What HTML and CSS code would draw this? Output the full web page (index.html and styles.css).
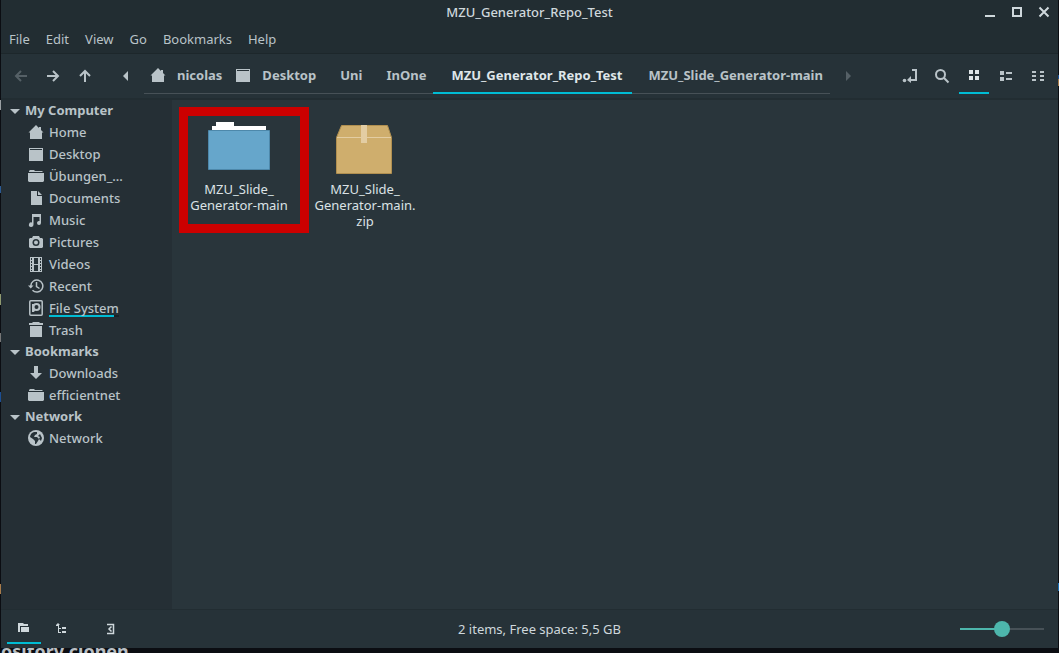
FILE: index.html
```html
<!DOCTYPE html>
<html lang="en">
<head>
<meta charset="utf-8">
<title>MZU_Generator_Repo_Test</title>
<link rel="stylesheet" href="styles.css">
</head>
<body>
<svg class="defs" aria-hidden="true">
  <symbol id="home" viewBox="0 0 16 16"><path d="M8 1 0.5 8.5H2V15h12V8.500h1.500L13 6V3h-2v1z"/></symbol>
  <symbol id="desktop" viewBox="0 0 16 16"><path d="M1 2h14v13H1z"/><path class="cut" d="M2 3h12v1H2z"/></symbol>
  <symbol id="folder" viewBox="0 0 16 16"><path d="M2 2h4l1 1h7l1 1H1V3z"/><path d="M0 5h16v8l-1 1H1l-1-1z"/></symbol>
  <symbol id="doc" viewBox="0 0 16 16"><path d="M3 1h6v5h5v9H3z"/><path d="M10 1l4 4h-4z"/></symbol>
  <symbol id="music" viewBox="0 0 16 16"><path d="M4 2h9v9a2 2 0 1 1-1.500-2V5H5.500v7.500A2.300 2.300 0 1 1 4 10.500z"/></symbol>
  <symbol id="camera" viewBox="0 0 16 16"><path d="M5 2h6l1 2h2l1 1v8l-1 1H2l-1-1V5l1-1h2z"/><circle class="cut" cx="8" cy="8.500" r="3.500"/><circle cx="8" cy="8.500" r="2"/></symbol>
  <symbol id="film" viewBox="0 0 16 16"><path d="M2 1h12v15H2z"/><path class="cut" d="M6 2h4v6H6zM6 9h4v6H6zM3 2h1v2H3zM3 5h1v2H3zM3 8h1v2H3zM3 11h1v2H3zM3 14h1v1H3zM12 2h1v2h-1zM12 5h1v2h-1zM12 8h1v2h-1zM12 11h1v2h-1zM12 14h1v1h-1z"/></symbol>
  <symbol id="recent" viewBox="0 0 16 16"><path class="line" d="M2.800 8A6 6 0 1 1 4.500 12.200M8.500 4v4.500l3 2"/><path d="M0 7.500h5.500L2.800 10.500z"/></symbol>
  <symbol id="disk" viewBox="0 0 16 16"><rect class="line" x="1.800" y="0.800" width="12.400" height="14.400" rx="1"/><circle class="line thick" cx="8.500" cy="7" r="3"/><path d="M4 4h2v8H4zM6 9l2 0-2 3z"/></symbol>
  <symbol id="trash" viewBox="0 0 16 16"><path d="M5 0h6l1 1h3v2H1V1h3zM2 4h12v11H2z"/></symbol>
  <symbol id="down" viewBox="0 0 16 16"><path d="M6 1h4v7h4l-6 6-6-6h4z"/></symbol>
  <symbol id="globe" viewBox="0 0 16 16"><circle cx="8" cy="8" r="8"/><path class="cut" d="M6 2l3 0 0 2-2 1-1 2h3l2 2-1 2-2 3-1 0V11L5 9 2 7a6 6 0 0 1 4-5zM12 4l2 4-1 3-2-2 1-2-2-1z"/></symbol>
</svg>

<div class="window">
  <header class="titlebar">
    <h1>MZU_Generator_Repo_Test</h1>
    <div class="controls">
      <button aria-label="Minimize"><svg viewBox="0 0 16 16"><path d="M3 11h10v2H3z"/></svg></button>
      <button aria-label="Maximize"><svg viewBox="0 0 16 16"><path class="line thick" d="M4 4h8v8H4z"/></svg></button>
      <button aria-label="Close"><svg viewBox="0 0 16 16"><path class="line thick" d="M3.500 3.500l9 9M12.500 3.500l-9 9"/></svg></button>
    </div>
  </header>
  <nav class="menubar">
    <button>File</button><button>Edit</button><button>View</button><button>Go</button><button>Bookmarks</button><button>Help</button>
  </nav>
  <div class="toolbar">
    <div class="history">
      <button aria-label="Back" disabled><svg viewBox="0 0 16 16"><path class="line thick" d="M14 8H3M8 3L3 8l5 5"/></svg></button>
      <button aria-label="Forward"><svg viewBox="0 0 16 16"><path class="line thick" d="M2 8h11M8 3l5 5-5 5"/></svg></button>
      <button aria-label="Up"><svg viewBox="0 0 16 16"><path class="line thick" d="M8 14V3M3 8l5-5 5 5"/></svg></button>
    </div>
    <button class="scroll" aria-label="Earlier folders"><svg viewBox="0 0 16 16"><path d="M10 3v10L5 8z"/></svg></button>
    <nav class="path">
      <button class="first"><svg><use href="#home"/></svg>nicolas</button>
      <button class="second"><svg><use href="#desktop"/></svg>Desktop</button>
      <button>Uni</button>
      <button>InOne</button>
      <button class="active">MZU_Generator_Repo_Test</button>
      <button>MZU_Slide_Generator-main</button>
    </nav>
    <button class="scroll dim" aria-label="Later folders"><svg viewBox="0 0 16 16"><path d="M6 3v10l5-5z"/></svg></button>
    <div class="views">
      <button aria-label="Edit location"><svg viewBox="0 0 16 16"><path class="line thick" d="M10 2h4v10H8"/><path d="M9 8v7l-4-3z"/><circle cx="2.500" cy="12.500" r="1.800"/></svg></button>
      <button aria-label="Search"><svg viewBox="0 0 16 16"><circle class="line thick" cx="6.500" cy="6.500" r="4.500"/><path class="line thick" d="M9.800 9.800L14.500 14.500"/></svg></button>
      <button class="active" aria-label="Icon view"><svg viewBox="0 0 16 16"><path d="M3 3h4v4H3zM9 3h4v4H9zM3 9h4v4H3zM9 9h4v4H9z"/></svg></button>
      <button aria-label="List view"><svg viewBox="0 0 16 16"><path d="M2 3h4v4H2zM2 9h4v4H2zM8 4h6v2H8zM8 10h6v2H8z"/></svg></button>
      <button aria-label="Compact view"><svg viewBox="0 0 16 16"><path d="M2 3h4v2H2zM2 7h4v2H2zM2 11h4v2H2zM10 3h4v2h-4zM10 7h4v2h-4zM10 11h4v2h-4z"/></svg></button>
    </div>
  </div>
  <div class="body">
    <aside class="sidebar">
      <h2>My Computer</h2>
      <ul>
        <li><a href="#"><svg><use href="#home"/></svg>Home</a></li>
        <li><a href="#"><svg><use href="#desktop"/></svg>Desktop</a></li>
        <li><a href="#"><svg><use href="#folder"/></svg>Übungen_...</a></li>
        <li><a href="#"><svg><use href="#doc"/></svg>Documents</a></li>
        <li><a href="#"><svg><use href="#music"/></svg>Music</a></li>
        <li><a href="#"><svg><use href="#camera"/></svg>Pictures</a></li>
        <li><a href="#"><svg><use href="#film"/></svg>Videos</a></li>
        <li><a href="#"><svg><use href="#recent"/></svg>Recent</a></li>
        <li><a href="#"><svg><use href="#disk"/></svg><span class="usage">File System</span></a></li>
        <li><a href="#"><svg><use href="#trash"/></svg>Trash</a></li>
      </ul>
      <h2>Bookmarks</h2>
      <ul>
        <li><a href="#"><svg><use href="#down"/></svg>Downloads</a></li>
        <li><a href="#"><svg><use href="#folder"/></svg>efficientnet</a></li>
      </ul>
      <h2>Network</h2>
      <ul>
        <li><a href="#"><svg><use href="#globe"/></svg>Network</a></li>
      </ul>
    </aside>
    <main class="files">
      <a class="file" href="#">
        <svg viewBox="0 0 64 64"><path fill="#fff" d="M9 8h18v4h32v6H5v-6h4z"/><path fill="#66a6cb" stroke="#4d88ab" d="M1.500 16.500h61v39h-61z"/></svg>
        <span>MZU_Slide_<br>Generator-main</span>
        <i class="highlight"></i>
      </a>
      <a class="file" href="#">
        <svg viewBox="0 0 64 64"><path fill="#cfae6d" stroke="#b08f50" d="M8.500 11.500h46l4 12v36h-55v-36z"/><path fill="#e3cda3" d="M4 23h54v1H4zM28 11h6v18h-6z"/></svg>
        <span>MZU_Slide_<br>Generator-main.<br>zip</span>
      </a>
    </main>
  </div>
  <footer class="status">
    <div class="toggles">
      <button class="active" aria-label="Places"><svg viewBox="0 0 16 16"><path d="M2 3h5l1 1h4v2H4v6H2z"/><path d="M5 7h8v5H5z"/></svg></button>
      <button aria-label="Tree"><svg viewBox="0 0 16 16"><path d="M4 2l2 2H5v3h2v1H5v3h2v1H4V5H2V4zM8 6h4v2H8zM8 10h4v2H8z"/></svg></button>
      <button class="hide" aria-label="Hide sidebar"><svg viewBox="0 0 16 16"><path class="line" d="M5 3.500h6.500v9H5M9.500 5.500L7 8l2.500 2.500"/></svg></button>
    </div>
    <p>2 items, Free space: 5,5 GB</p>
    <input class="zoom" type="range" min="0" max="100" value="50" aria-label="Zoom">
  </footer>
</div>
<div class="behind"><span>ository clonen</span></div>
</body>
</html>
```
FILE: styles.css
```css
* { box-sizing: border-box; }
body {
  margin: 0;
  height: 100vh;
  display: flex;
  flex-direction: column;
  overflow: hidden;
  padding: 0 1px;
  background:
    linear-gradient(#0b0d12 100px, #9aa0a3 100px 110px, #0b0d12 110px 186px, #2a5a94 186px 193px, #0b0d12 193px 294px, #8f9a70 294px 305px, #0b0d12 305px 333px, #777 333px 342px, #0b0d12 342px 392px, #1c4f94 392px 402px, #0b0d12 402px 584px, #a87b4a 584px 594px, #0b0d12 594px) left / 1px 100% no-repeat,
    linear-gradient(#0b0d12 75px, #1c4f94 75px 79px, #a87b4a 79px 86px, #0b0d12 86px 583px, #1c6fb4 583px 591px, #0b0d12 591px) right / 1px 100% no-repeat,
    #0b0d12;
  font: 13px/16px "Noto Sans", sans-serif;
  color: #b9c3c8;
}
.defs { position: absolute; width: 0; height: 0; }
button { border: 0; padding: 0; background: none; font: inherit; color: inherit; }
a { color: inherit; text-decoration: none; }
h1, h2, p, ul { margin: 0; padding: 0; font-size: 13px; }
ul { list-style: none; }
svg { width: 16px; height: 16px; fill: currentColor; display: block; flex: none; }
.line { fill: none; stroke: currentColor; stroke-width: 1.5; }
.thick { stroke-width: 2; }
.cut { fill: #263238; }
.window { flex: 1; min-height: 0; display: flex; flex-direction: column; background: #263238; }
.titlebar {
  display: grid;
  grid-template-columns: 1fr auto 1fr;
  align-items: center;
  height: 25px;
  padding-bottom: 1px;
  background: #222d32;
}
.titlebar h1 { grid-column: 2; font-weight: 500; color: #cfd8dc; }
.controls { display: flex; justify-content: flex-end; gap: 11px; padding-right: 6px; color: #cfd8dc; }
.menubar {
  display: flex;
  align-items: center;
  gap: 16px;
  height: 29px;
  padding-left: 8px;
  background: #222d32;
  border-bottom: 1px solid #1d272b;
}
.toolbar { display: flex; height: 46px; border-bottom: 2px solid #222d32; padding: 0 5px 0 12px; }
.history { display: flex; gap: 16px; }
.history button:disabled { color: #556066; }
.scroll { width: 36px; display: grid; place-items: center; }
.history + .scroll { width: 44px; padding-left: 21px; margin-right: 7px; }
.dim { color: #556066; }
.path { display: flex; height: 40px; border-bottom: 1px solid #475157; font-weight: 700; white-space: nowrap; }
.path button { display: flex; align-items: center; gap: 11px; margin-bottom: -1px; padding: 4px 7px 0 17px; border-bottom: 2px solid transparent; }
.path .first, .path .second { padding-left: 6px; }
.path .active { padding: 4px 9px 0 18px; color: #dfe6e9; }
.path .active, .views .active, .toggles .active { border-bottom: 2px solid #00bcd4; }
.views { display: flex; gap: 2px; height: 40px; margin-left: auto; }
.views button { width: 30px; display: grid; place-items: center; padding-top: 4px; }
.views .active { color: #dfe6e9; }
.body { flex: 1; min-height: 0; display: flex; }
.sidebar { width: 171px; background: #252f35; font-weight: 500; }
.sidebar h2 { display: flex; align-items: center; gap: 5px; height: 21px; padding: 0 0 2px 9px; }
.sidebar h2::before { content: ""; margin-top: 3px; border: 5px solid transparent; border-top-color: currentColor; border-bottom: 0; }
.sidebar a { display: flex; align-items: center; gap: 5px; height: 22px; padding-left: 27px; }
.usage { height: 18px; line-height: 18px; background: linear-gradient(90deg, #00bcd4 93%, #1a2226 93%) bottom / 100% 2px no-repeat; }
.files { flex: 1; display: flex; align-items: flex-start; padding: 3px 4px; background: #29353b; color: #dbe2e5; }
.file { position: relative; width: 126px; display: flex; flex-direction: column; align-items: center; gap: 3px; padding-top: 11px; text-align: center; }
.file svg { width: 64px; height: 64px; }
.highlight { position: absolute; left: 3px; top: 4px; width: 130px; height: 126px; border: 9px solid #c00; }
.status {
  display: grid;
  grid-template-columns: 1fr auto 1fr;
  height: 39px;
  border-top: 1px solid #222d32;
  background: #263238;
  color: #cfd8dc;
}
.status p { align-self: center; padding-left: 20px; }
.toggles { display: flex; align-items: flex-start; padding-left: 6px; gap: 4px; }
.toggles button { width: 34px; height: 34px; display: grid; place-items: center; padding-top: 4px; }
.toggles .hide { margin-left: 10px; }
.zoom { justify-self: end; align-self: center; width: 84px; height: 16px; margin: 0 14px 0 0; appearance: none; background: linear-gradient(90deg, #4db6ac 50%, #475157 50%) center / 100% 2px no-repeat; }
.zoom::-webkit-slider-thumb { appearance: none; width: 16px; height: 16px; border-radius: 50%; background: #4db6ac; }
.behind { height: 5px; overflow: hidden; background: #0b0d12; color: #b9bfc4; font: 700 18px/18px "Noto Sans", sans-serif; }
.behind span { display: block; margin-top: -6px; }
```
